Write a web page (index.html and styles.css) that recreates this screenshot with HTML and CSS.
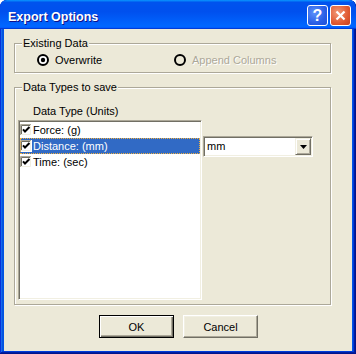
FILE: index.html
```html
<!DOCTYPE html>
<html>
<head>
<meta charset="utf-8">
<title>Export Options</title>
<link rel="stylesheet" href="styles.css">
</head>
<body>
<div class="window">
  <div class="titlebar">
    <span class="title">Export Options</span>
    <div class="controls">
      <div class="tbtn help">?</div>
      <div class="tbtn close"><svg width="11" height="11" viewBox="0 0 11 11"><path d="M1.5 1.5L9.5 9.5M9.5 1.5L1.5 9.5" stroke="#fff" stroke-width="2.2" fill="none"/></svg></div>
    </div>
  </div>
  <div class="body">
    <div class="group g1">
      <span class="legend">Existing Data</span>
      <div class="radios">
        <div class="radio">
          <svg class="rb" width="12" height="12" viewBox="0 0 12 12"><circle cx="6" cy="6" r="5" fill="#fff" stroke="#000" stroke-width="2"/><circle cx="6" cy="6" r="2.2" fill="#000"/></svg>
          <span>Overwrite</span>
        </div>
        <div class="radio disabled">
          <svg class="rb" width="12" height="12" viewBox="0 0 12 12"><circle cx="6" cy="6" r="5" fill="none" stroke="#000" stroke-width="2"/></svg>
          <span class="dis">Append Columns</span>
        </div>
      </div>
    </div>
    <div class="group g2">
      <span class="legend">Data Types to save</span>
      <div class="colhead">Data Type (Units)</div>
      <div class="listrow">
        <div class="listbox">
          <div class="item">
            <svg class="cb" width="12" height="12" viewBox="0 0 12 12"><rect width="12" height="12" fill="#fff"/><path d="M0.5 12V0.5H12" fill="none" stroke="#aca899"/><path d="M1.5 11V1.5H11" fill="none" stroke="#716f64"/><path d="M0 11.5H11.5V0" fill="none" stroke="#fff"/><path d="M1 10.5H10.5V1" fill="none" stroke="#f1efe2"/><path d="M3 5.3L5 7.5L9.5 3" fill="none" stroke="#000" stroke-width="2"/></svg>
            <span class="lbl">Force: (g)</span>
          </div>
          <div class="item sel">
            <svg class="cb" width="12" height="12" viewBox="0 0 12 12"><rect width="12" height="12" fill="#fff"/><path d="M0.5 12V0.5H12" fill="none" stroke="#aca899"/><path d="M1.5 11V1.5H11" fill="none" stroke="#716f64"/><path d="M0 11.5H11.5V0" fill="none" stroke="#fff"/><path d="M1 10.5H10.5V1" fill="none" stroke="#f1efe2"/><path d="M3 5.3L5 7.5L9.5 3" fill="none" stroke="#000" stroke-width="2"/></svg>
            <span class="lbl">Distance: (mm)</span>
          </div>
          <div class="item">
            <svg class="cb" width="12" height="12" viewBox="0 0 12 12"><rect width="12" height="12" fill="#fff"/><path d="M0.5 12V0.5H12" fill="none" stroke="#aca899"/><path d="M1.5 11V1.5H11" fill="none" stroke="#716f64"/><path d="M0 11.5H11.5V0" fill="none" stroke="#fff"/><path d="M1 10.5H10.5V1" fill="none" stroke="#f1efe2"/><path d="M3 5.3L5 7.5L9.5 3" fill="none" stroke="#000" stroke-width="2"/></svg>
            <span class="lbl">Time: (sec)</span>
          </div>
        </div>
        <div class="combo">
          <span class="combo-text">mm</span>
          <span class="combo-btn"><svg width="7" height="4" viewBox="0 0 7 4"><path d="M0 0H7L3.5 4Z" fill="#000"/></svg></span>
        </div>
      </div>
    </div>
    <div class="buttons">
      <button class="btn default">OK</button>
      <button class="btn">Cancel</button>
    </div>
  </div>
</div>
</body>
</html>
```
FILE: styles.css
```css
html, body {
  margin: 0;
  padding: 0;
  background: #ffffff;
}

body {
  font-family: "Liberation Sans", Arial, sans-serif;
  font-size: 11px;
  color: #000;
}

.window {
  width: 356px;
  height: 354px;
  box-sizing: border-box;
  display: flex;
  flex-direction: column;
  background: #0055e5;
  border-radius: 7px 7px 0 0;
  box-shadow: inset -1px -1px #00138c, inset 1px 1px #0831d9, inset -2px -2px #001ea0, inset 2px 2px #166aee, inset -3px -3px #003bda, inset 3px 3px #0855dd;
  padding-bottom: 3px;
  overflow: hidden;
}

.titlebar {
  flex: none;
  height: 29px;
  box-sizing: border-box;
  display: flex;
  align-items: flex-start;
  justify-content: space-between;
  padding: 0 5px 0 8px;
  border-radius: 7px 7px 0 0;
  background: linear-gradient(180deg, #0997ff, #0053ee 8%, #0050ee 40%, #0066ff 88%, #0066ff 93%, #005bff 95%, #003dd7 96%, #003dd7);
}

.title {
  margin-top: 10px;
  line-height: 14px;
  color: #fff;
  font-family: "Liberation Sans", Arial, sans-serif;
  font-weight: bold;
  font-size: 12.5px;
  text-shadow: 1px 1px #0f1089;
}

.controls {
  display: flex;
  gap: 2px;
  margin-top: 5px;
}

.tbtn {
  width: 21px;
  height: 21px;
  box-sizing: border-box;
  border: 1px solid #fff;
  border-radius: 3px;
  display: flex;
  align-items: center;
  justify-content: center;
}

.help {
  background: radial-gradient(circle at 35% 35%, #5d93fb, #2a5fe6 60%, #1d4fd8);
  color: #fff;
  font-family: "Liberation Sans", Arial, sans-serif;
  font-weight: bold;
  font-size: 16px;
  line-height: 19px;
}

.close {
  background: radial-gradient(circle at 35% 35%, #f29a78, #e05a32 60%, #c8401e);
}

.body {
  flex: 1;
  margin: 0 4px;
  background: #ece9d8;
  padding: 14px 0 0 10px;
  display: flex;
  flex-direction: column;
}

.group {
  position: relative;
  width: 317px;
  box-sizing: border-box;
  border: 1px solid #aca899;
  box-shadow: inset 1px 1px #fff, 1px 1px #fff;
}

.legend {
  position: absolute;
  top: -7px;
  left: 7px;
  background: #ece9d8;
  padding: 0 1px;
  line-height: 13px;
  white-space: nowrap;
}

.g1 {
  height: 30px;
  padding: 10px 0 0 22px;
}

.radios {
  display: grid;
  grid-template-columns: 137px auto;
}

.radio {
  display: flex;
  align-items: flex-start;
  height: 13px;
  line-height: 13px;
  white-space: nowrap;
}

.rb {
  flex: none;
  margin-right: 6px;
}

.dis {
  color: #aca899;
  text-shadow: 1px 1px #fff;
}

.g2 {
  height: 218px;
  margin-top: 14px;
  padding: 17px 0 0 3px;
}

.colhead {
  line-height: 13px;
  margin: 0 0 2px 15px;
}

.listrow {
  display: flex;
  align-items: flex-start;
}

.listbox {
  width: 184px;
  height: 180px;
  box-sizing: border-box;
  background: #fff;
  border: 1px solid;
  border-color: #aca899 #fff #fff #aca899;
  box-shadow: inset 1px 1px #716f64, inset -1px -1px #f1efe2;
  padding: 1px;
}

.item {
  height: 16px;
  line-height: 16px;
  display: flex;
  align-items: center;
  white-space: nowrap;
}

.item.sel {
  background: #316ac5;
  color: #fff;
  outline: 1px dotted #f0b040;
  outline-offset: -1px;
}

.cb {
  flex: none;
  margin-right: 1px;
}

.combo {
  margin: 16px 0 0 1px;
  width: 110px;
  height: 21px;
  box-sizing: border-box;
  background: #fff;
  border: 1px solid;
  border-color: #aca899 #fff #fff #aca899;
  box-shadow: inset 1px 1px #716f64, inset -1px -1px #f1efe2;
  padding: 1px;
  display: flex;
}

.combo-text {
  flex: 1;
  padding-left: 2px;
  line-height: 17px;
}

.combo-btn {
  flex: none;
  width: 16px;
  height: 17px;
  box-sizing: border-box;
  background: #ece9d8;
  border: 1px solid;
  border-color: #f1efe2 #716f64 #716f64 #f1efe2;
  box-shadow: inset 1px 1px #fff, inset -1px -1px #aca899;
  display: flex;
  align-items: center;
  justify-content: center;
}

.buttons {
  display: flex;
  gap: 9px;
  margin-top: 10px;
  padding-left: 85px;
}

.btn {
  width: 75px;
  height: 23px;
  box-sizing: border-box;
  margin: 0;
  padding: 0;
  font-family: "Liberation Sans", Arial, sans-serif;
  font-size: 11px;
  color: #000;
  background: #ece9d8;
  border: 1px solid;
  border-color: #fff #716f64 #716f64 #fff;
  box-shadow: inset -1px -1px #aca899, inset 1px 1px #f1efe2;
}

.btn.default {
  border-color: #000;
  box-shadow: inset 1px 1px #fff, inset -1px -1px #716f64, inset -2px -2px #aca899;
}
```
